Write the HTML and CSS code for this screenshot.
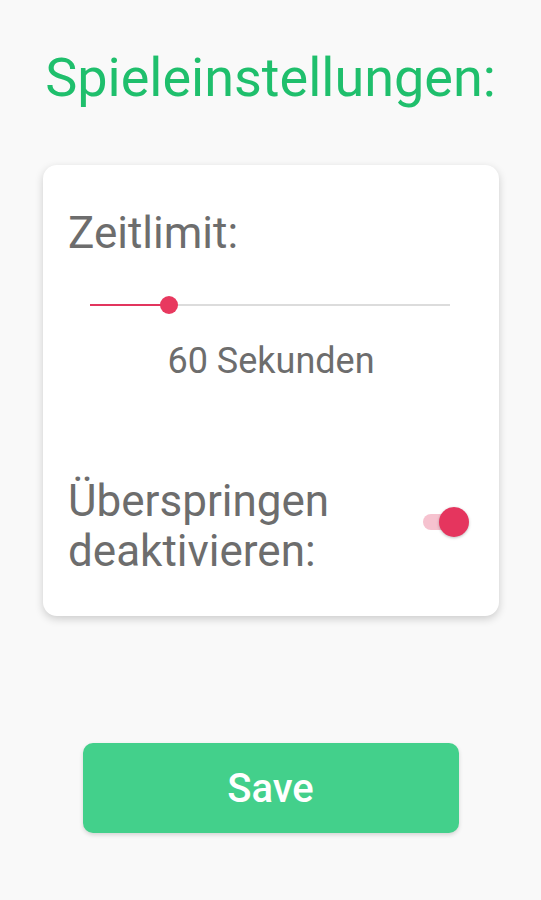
FILE: index.html
```html
<!DOCTYPE html>
<html lang="de">
<head>
  <meta charset="UTF-8" />
  <meta name="viewport" content="width=device-width, initial-scale=1.0"/>
  <title>Spieleinstellungen</title>
  <link rel="stylesheet" href="styles.css">
</head>
<body>

  <h1 class="title">Spieleinstellungen:</h1>

  <div class="card">
    <div class="label">Zeitlimit:</div>

    <div class="slider">
      <div class="track">
        <div class="track-fill" style="width: 22%"></div>
        <div class="thumb" style="left: 22%"></div>
      </div>
    </div>
    <div class="slider-value">60 Sekunden</div>

    <div class="switch-row">
      <div class="label">Überspringen<br>deaktivieren:</div>
      <div class="switch">
        <div class="switch-track"></div>
        <div class="switch-thumb"></div>
      </div>
    </div>
  </div>

  <button class="save">Save</button>

</body>
</html>
```

FILE: styles.css
```css
* {
  box-sizing: border-box;
}

body {
  margin: 0;
  font-family: Roboto, "Noto Sans", sans-serif;
  background: #f9f9f9;
  min-height: 100vh;
  padding-top: 48px;
  display: flex;
  flex-direction: column;
  align-items: center;
}

.title {
  margin: 0;
  font-size: 54px;
  font-weight: 400;
  line-height: 60px;
  color: #1fbf6c;
  text-align: center;
}

.card {
  margin-top: 57px;
  width: 456px;
  margin-left: 1px;
  background: #fff;
  border-radius: 14px;
  box-shadow: 0 3px 8px rgba(0, 0, 0, 0.18);
  padding: 43px 28px 40px 25px;
  color: #6d6d6d;
}

.label {
  font-size: 44px;
  line-height: 50px;
}

.slider {
  padding: 0 22px;
  margin-top: 46px;
}

.track {
  position: relative;
  height: 2px;
  background: #dcdcdc;
  margin-right: -1px;
}

.track-fill {
  height: 2px;
  background: #e2355e;
}

.thumb {
  position: absolute;
  top: -8px;
  width: 18px;
  height: 18px;
  margin-left: -9px;
  border-radius: 50%;
  background: #e8395f;
}

.slider-value {
  margin-top: 35px;
  text-align: center;
  font-size: 36px;
  line-height: 40px;
  padding-left: 3px;
}

.switch-row {
  margin-top: 95px;
  display: flex;
  align-items: center;
  justify-content: space-between;
}

.switch {
  position: relative;
  width: 48px;
  height: 30px;
  margin-top: -9px;
}

.switch-track {
  position: absolute;
  left: 0;
  top: 7px;
  width: 40px;
  height: 16px;
  border-radius: 8px;
  background: #f6c2cf;
}

.switch-thumb {
  position: absolute;
  right: 2px;
  top: 0;
  width: 30px;
  height: 30px;
  border-radius: 50%;
  background: #e5355e;
  box-shadow: 0 1px 3px rgba(0, 0, 0, 0.25);
}

.save {
  margin-top: 127px;
  width: 376px;
  height: 90px;
  border: none;
  border-radius: 10px;
  background: #43d08b;
  color: #fff;
  font-family: Roboto, "Noto Sans", sans-serif;
  font-size: 40px;
  font-weight: 500;
  box-shadow: 0 2px 4px rgba(0, 0, 0, 0.15);
}
```
